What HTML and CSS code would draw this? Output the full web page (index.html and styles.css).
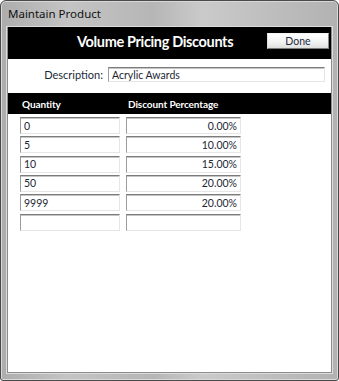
FILE: index.html
```html
<!DOCTYPE html>
<html lang="en">
  <head>
    <meta charset="UTF-8" />
    <title>Maintain Product</title>
    <link rel="stylesheet" href="styles.css">
  </head>
  <body>
    <div class="window">
      <div class="titlebar">Maintain Product</div>

      <div class="client">
        <div class="banner">
          <h1>Volume Pricing Discounts</h1>
          <button class="done">Done</button>
        </div>

        <div class="desc-row">
          <label for="desc">Description:</label>
          <input id="desc" class="field desc" type="text" value="Acrylic Awards" />
        </div>

        <div class="grid-head">
          <span class="col-qty">Quantity</span>
          <span class="col-pct">Discount Percentage</span>
        </div>

        <div class="grid">
          <input class="field qty" type="text" value="0" />
          <input class="field pct" type="text" value="0.00%" />
          <input class="field qty" type="text" value="5" />
          <input class="field pct" type="text" value="10.00%" />
          <input class="field qty" type="text" value="10" />
          <input class="field pct" type="text" value="15.00%" />
          <input class="field qty" type="text" value="50" />
          <input class="field pct" type="text" value="20.00%" />
          <input class="field qty" type="text" value="9999" />
          <input class="field pct" type="text" value="20.00%" />
          <input class="field qty" type="text" value="" />
          <input class="field pct" type="text" value="" />
        </div>
      </div>
    </div>
  </body>
</html>
```

FILE: styles.css
```css
body {
  margin: 0;
  padding: 0;
  background-color: #ffffff;
  font-family: "Lato", "Open Sans", sans-serif;
}

.window {
  width: 339px;
  height: 381px;
  box-sizing: border-box;
  border: 1px solid #4a4a4a;
  border-radius: 6px 6px 3px 3px;
  background: linear-gradient(90deg, #adadad 0%, #c4c4c4 20%, #b6b6b6 45%, #cacaca 60%, #b2b2b2 100%);
  box-shadow: inset 0 0 0 1px #d8d8d8;
  display: flex;
  flex-direction: column;
}

.titlebar {
  height: 26px;
  box-sizing: border-box;
  padding: 5px 0 0 7px;
  font-family: "Noto Sans", "Open Sans", sans-serif;
  font-size: 11.5px;
  color: #111;
}

.client {
  flex: 1;
  margin: 0 6px 7px 6px;
  background-color: #ffffff;
  border: 1px solid #8c8c8c;
  border-top: none;
  box-shadow: 0 0 0 1px #dcdcdc;
}

.banner {
  height: 32px;
  background-color: #000000;
  display: flex;
  align-items: flex-start;
}

.banner h1 {
  flex: 1;
  margin: 0;
  padding: 5px 0 0 69px;
  color: #ffffff;
  font-size: 14.5px;
  font-weight: 700;
  letter-spacing: -0.35px;
  line-height: 20px;
}

.done {
  width: 62px;
  height: 16px;
  margin: 6px 2px 0 0;
  padding: 0;
  border: 1px solid #9a9a9a;
  border-color: #f4f4f4 #8a8a8a #7a7a7a #e0e0e0;
  background: linear-gradient(#ffffff, #f2f2f2 60%, #dedede);
  font-family: "Lato", sans-serif;
  font-size: 10.5px;
  color: #1c2a3c;
  line-height: 13px;
}

.desc-row {
  height: 34px;
  box-sizing: border-box;
  padding-top: 8px;
  display: flex;
  align-items: flex-start;
}

.desc-row label {
  width: 95px;
  text-align: right;
  padding-right: 5px;
  font-size: 11px;
  color: #1a2a3a;
  line-height: 15px;
}

.field {
  box-sizing: border-box;
  height: 17px;
  margin: 0;
  padding: 0 3px;
  border: 1px solid;
  border-color: #7c7c7c #e6e6e6 #e6e6e6 #9c9c9c;
  box-shadow: inset 0 1px 0 #c4c4c4;
  background-color: #ffffff;
  font-family: "Lato", sans-serif;
  font-size: 10.5px;
  color: #1e2632;
  outline: none;
}

.desc {
  width: 217px;
  height: 15px;
  line-height: 13px;
}

.grid-head {
  height: 21px;
  background-color: #000000;
  display: grid;
  grid-template-columns: 100px 115px;
  column-gap: 6px;
  padding-left: 12px;
  align-items: center;
}

.grid-head span {
  padding-left: 2px;
  color: #ffffff;
  font-size: 10px;
  font-weight: 700;
  letter-spacing: -0.1px;
}

.grid {
  display: grid;
  grid-template-columns: 100px 115px;
  column-gap: 6px;
  row-gap: 2.33px;
  padding: 3px 0 0 12px;
}

.pct {
  text-align: right;
}
```
